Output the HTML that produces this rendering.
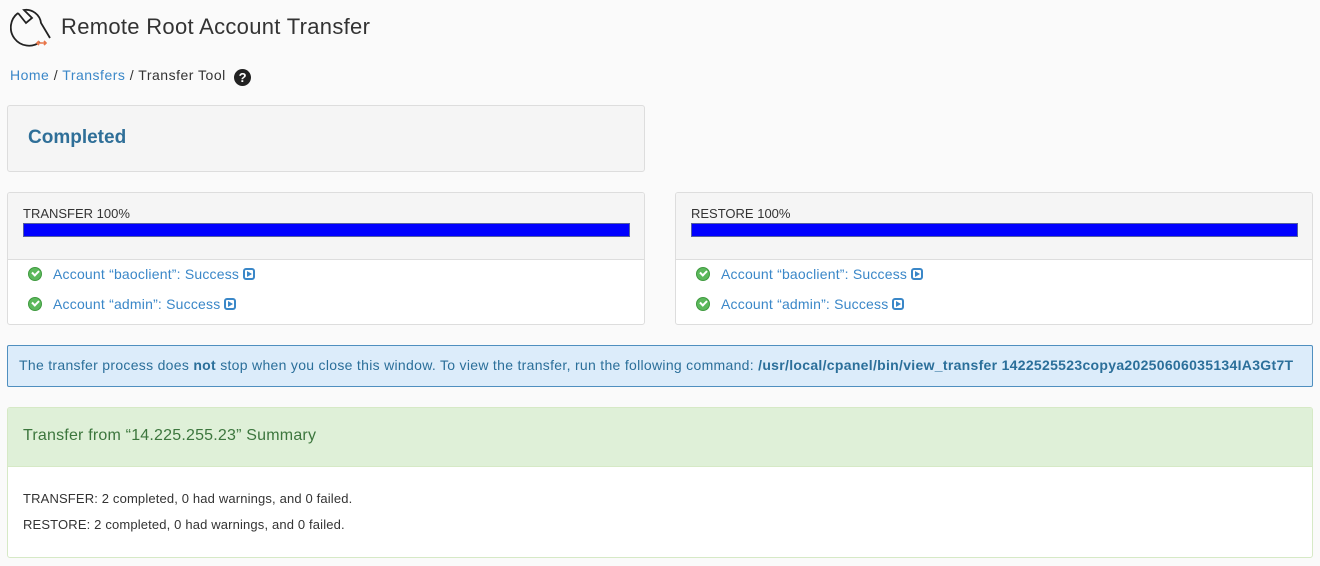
<!DOCTYPE html>
<html><head><meta charset="utf-8"><style>
*{box-sizing:border-box;margin:0;padding:0}
body{width:1320px;height:566px;background:#fafafa;font-family:"Liberation Sans",sans-serif;color:#333;position:relative;overflow:hidden}
.abs{position:absolute}
a{color:#3a87c8;text-decoration:none}
.panel{position:absolute;border:1px solid #ddd;border-radius:3px;background:#fff;overflow:hidden}
.ph{background:#f5f5f5;border-bottom:1px solid #ddd}
.bar{position:absolute;left:15px;right:14px;top:30px;height:14px;background:#0000ff;border:1px solid #5560a0}
.row{position:absolute;left:20px;font-size:14px;color:#3a87c8;white-space:nowrap;letter-spacing:.2px}
.ck{display:inline-block;width:14px;height:14px;border-radius:50%;background:#5cb85c;border:1px solid #3f9a3f;vertical-align:-2px;margin-right:11px;position:relative}
.ck:after{content:"";position:absolute;left:3px;top:2px;width:5px;height:3px;border-left:2px solid #fff;border-bottom:2px solid #fff;transform:rotate(-45deg)}
.pl{display:inline-block;width:12px;height:12px;border:2px solid #3a87c8;border-radius:3px;vertical-align:-1px;margin-left:4px;position:relative}
.pl:after{content:"";position:absolute;left:2px;top:1px;border-left:5px solid #3a87c8;border-top:3px solid transparent;border-bottom:3px solid transparent}
</style></head><body>
<svg class="abs" style="left:10px;top:8px" width="42" height="42" viewBox="0 0 42 42">
<path d="M8 5 A15 15 0 0 0 30 34" fill="none" stroke="#222" stroke-width="1.8"/>
<path d="M8 5 L16 15 L22 10 L14 2 A15 15 0 0 1 31 15 L40 30" fill="none" stroke="#222" stroke-width="1.8"/>
<path d="M27 35 h9 M29 33 l-2 2 2 2 M34 37 l2 -2 -2 -2" fill="none" stroke="#e8764a" stroke-width="1.6"/>
</svg>
<div class="abs" style="left:61px;top:14px;font-size:22px;color:#333;letter-spacing:.3px">Remote Root Account Transfer</div>
<div class="abs" style="left:10px;top:67px;font-size:14px;white-space:nowrap;letter-spacing:.5px"><a>Home</a> / <a>Transfers</a> / Transfer Tool <span style="display:inline-block;width:17px;height:17px;border-radius:50%;background:#222;color:#fff;font-weight:bold;font-size:13px;text-align:center;line-height:17px;margin-left:4px;vertical-align:-2px;letter-spacing:0">?</span></div>

<div class="panel" style="left:7px;top:105px;width:638px;height:67px;background:#f5f5f5">
<div class="abs" style="left:20px;top:21px;font-size:19px;font-weight:bold;color:#2f6f98">Completed</div></div>

<div class="panel" style="left:7px;top:192px;width:638px;height:133px">
<div class="ph" style="height:67px;position:relative"><div class="abs" style="left:15px;top:13px;font-size:13px">TRANSFER 100%</div><div class="bar"></div></div>
<div class="row" style="top:73px"><span class="ck"></span>Account “baoclient”: Success<span class="pl"></span></div>
<div class="row" style="top:103px"><span class="ck"></span>Account “admin”: Success<span class="pl"></span></div>
</div>
<div class="panel" style="left:675px;top:192px;width:638px;height:133px">
<div class="ph" style="height:67px;position:relative"><div class="abs" style="left:15px;top:13px;font-size:13px">RESTORE 100%</div><div class="bar"></div></div>
<div class="row" style="top:73px"><span class="ck"></span>Account “baoclient”: Success<span class="pl"></span></div>
<div class="row" style="top:103px"><span class="ck"></span>Account “admin”: Success<span class="pl"></span></div>
</div>

<div class="abs" style="left:7px;top:345px;width:1306px;height:42px;background:#dcecfa;border:1px solid #4f8fbf;border-radius:2px;color:#2b6f9a;font-size:14px;white-space:nowrap;overflow:hidden;padding:11px 0 0 11px;letter-spacing:.3px">The transfer process does <b>not</b> stop when you close this window. To view the transfer, run the following command: <b>/usr/local/cpanel/bin/view_transfer 1422525523copya20250606035134IA3Gt7T</b></div>

<div class="panel" style="left:7px;top:407px;width:1306px;height:151px;border-color:#d6e9c6">
<div style="height:59px;background:#dff0d8;border-bottom:1px solid #d6e9c6;position:relative"><div class="abs" style="left:15px;top:19px;font-size:16px;color:#3c763d;letter-spacing:.2px">Transfer from “14.225.255.23” Summary</div></div>
<div class="abs" style="left:15px;top:78px;font-size:13px;line-height:26px;letter-spacing:.15px">TRANSFER: 2 completed, 0 had warnings, and 0 failed.<br>RESTORE: 2 completed, 0 had warnings, and 0 failed.</div>
</div>
</body></html>
